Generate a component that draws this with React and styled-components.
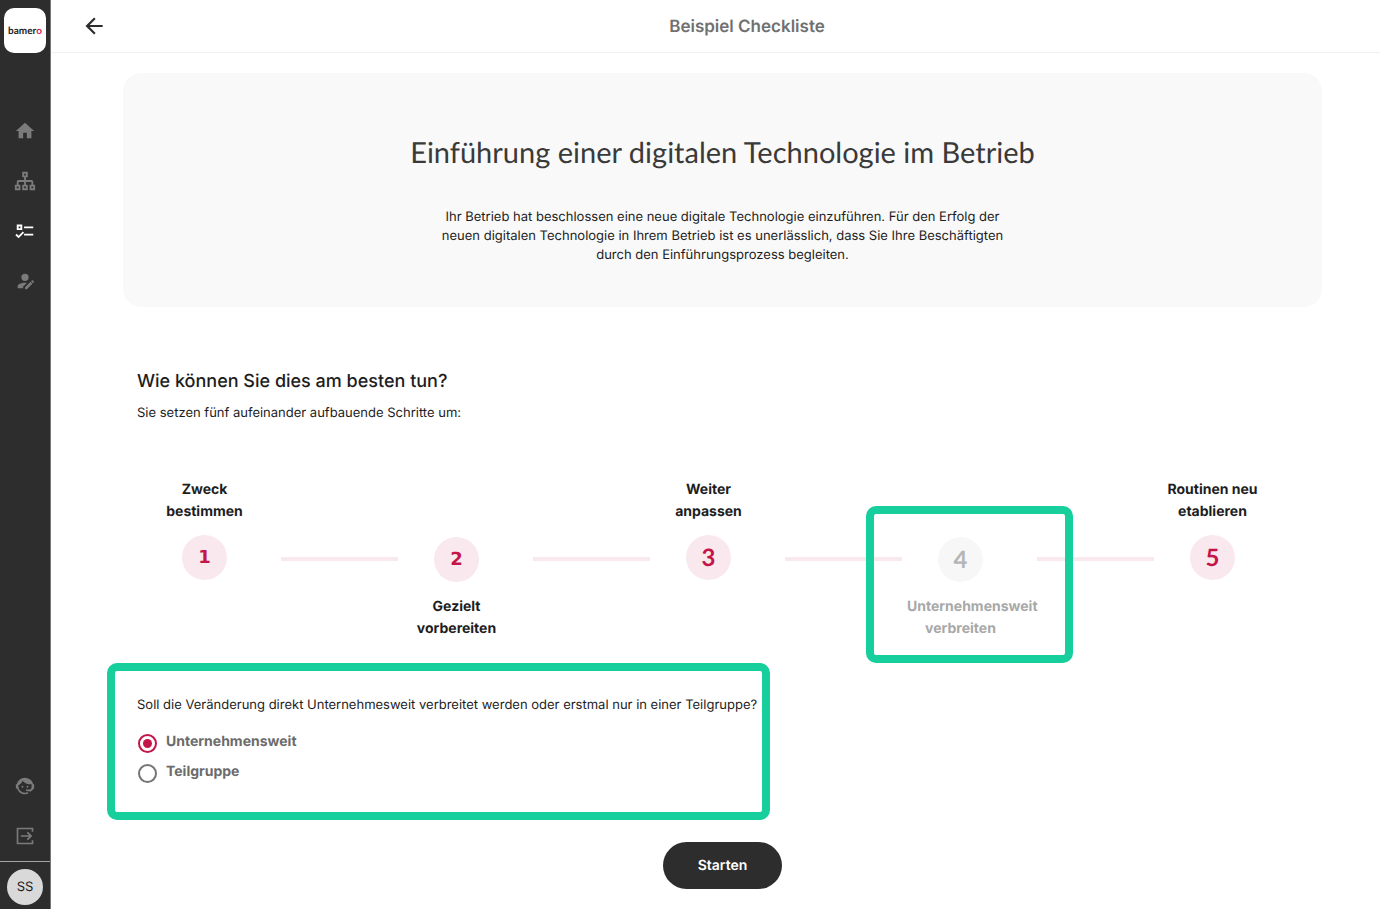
import React, { useState } from "react";
import styled, { createGlobalStyle } from "styled-components";

const GlobalStyle = createGlobalStyle`
  *, *::before, *::after { box-sizing: border-box; }
  body { margin: 0; background: #fff; color: #1d1d1d; font-family: Inter, "Liberation Sans", sans-serif; font-size: 13px; line-height: 19px; text-rendering: geometricPrecision; }
  button { text-rendering: inherit; }
  h1, h2, p, ol { margin: 0; padding: 0; }
`;

const Page = styled.div`
  display: flex;
  min-height: 100vh;
`;

const Sidebar = styled.aside`
  display: flex;
  flex-direction: column;
  align-items: center;
  flex: 0 0 51px;
  padding-top: 8px;
  background: #2d2d2d;
  border-right: 1px solid #767676;
`;

const Logo = styled.a`
  display: flex;
  align-items: center;
  justify-content: center;
  width: 42px;
  height: 45px;
  border-radius: 10px;
  background: #fff;
  color: #222;
  font: 700 10px/12px Lato, sans-serif;
  text-decoration: none;
`;

const LogoAccent = styled.span`
  color: #d81e55;
`;

const Nav = styled.nav`
  display: flex;
  flex-direction: column;
  margin-top: 53px;
  flex: 1;
`;

const NavLink = styled.a`
  display: flex;
  align-items: center;
  justify-content: center;
  width: 50px;
  height: 50px;
  color: ${(p) => (p.$active ? "#fff" : "#7b7b7b")};
`;

const SidebarFooter = styled.div`
  display: flex;
  flex-direction: column;
  align-items: center;
`;

const Account = styled.div`
  display: flex;
  justify-content: center;
  width: 50px;
  padding: 7px 0 4px;
  border-top: 1px solid #a5a5a5;
`;

const Avatar = styled.button`
  width: 36px;
  height: 36px;
  padding: 0;
  border: 0;
  border-radius: 50%;
  background: #d9d9d9;
  color: #1d1d1d;
  font: 13px/19px Inter, sans-serif;
`;

const Main = styled.main`
  flex: 1;
  min-width: 0;
`;

const TopBar = styled.header`
  display: flex;
  align-items: center;
  height: 53px;
  border-bottom: 1px solid #f0f0f0;
`;

const BackButton = styled.button`
  display: flex;
  align-items: center;
  justify-content: flex-end;
  width: 63px;
  height: 52px;
  padding: 0 7px;
  border: 0;
  background: none;
  color: #2d2d2d;
`;

const PageTitle = styled.h1`
  flex: 1;
  padding-top: 2px;
  text-align: center;
  font-size: 17px;
  line-height: 24px;
  font-weight: 600;
  color: #707070;
`;

const Content = styled.div`
  padding: 20px 58px 20px 72px;
`;

const Intro = styled.section`
  display: flex;
  flex-direction: column;
  align-items: center;
  padding: 60px 20px 42px;
  border-radius: 18px;
  background: #f9f9f9;
  text-align: center;
`;

const IntroTitle = styled.h2`
  font: 400 29px/40px Lato, sans-serif;
  color: #3a3a3a;
`;

const IntroText = styled.p`
  max-width: 580px;
  margin-top: 35px;
`;

const Guide = styled.section`
  padding: 63px 14px 0;
`;

const GuideTitle = styled.h2`
  font-size: 18px;
  line-height: 24px;
  font-weight: 500;
`;

const GuideText = styled.p`
  margin-top: 10px;
`;

const Steps = styled.ol`
  display: flex;
  margin-top: 55px;
  padding: 0 37px 0 9px;
  list-style: none;
`;

const Step = styled.li`
  position: relative;
  display: flex;
  flex: 1 1 0;
  min-width: 0;
  flex-direction: ${(p) => (p.$below ? "column" : "column-reverse")};
  justify-content: ${(p) => (p.$below ? "flex-start" : "flex-end")};
  align-items: center;
  gap: ${(p) => (p.$below ? "13px" : "12px")};
  padding-top: ${(p) => (p.$below ? "59px" : "0")};
`;

const StepNumber = styled.span`
  display: flex;
  align-items: center;
  justify-content: center;
  width: 45px;
  height: 45px;
  border-radius: 50%;
  background: ${(p) => (p.$muted ? "#f7f7f7" : "#f9e8ed")};
  color: ${(p) => (p.$muted ? "#b5b5b5" : "#c31547")};
  font: ${(p) => (p.$short ? '700 18px/45px "DejaVu Sans"' : "700 24px/45px Lato")}, sans-serif;
`;

const StepLabel = styled.span`
  width: 100%;
  padding: 1px 5px 0;
  text-align: center;
  font-size: 14px;
  line-height: 22px;
  font-weight: 700;
  color: ${(p) => (p.$muted ? "#a8a8a8" : "#1d1d1d")};
`;

const StepLine = styled.li`
  flex: 1 1 0;
  height: 4px;
  margin: 79px 0 0 18px;
  background: #f9e8ed;
`;

const StepHighlight = styled.span`
  position: absolute;
  inset: 28px -54px -23px -36px;
  border: 8px solid #16cf9c;
  border-radius: 10px;
  pointer-events: none;
`;

const Choice = styled.fieldset`
  width: fit-content;
  min-width: 658px;
  margin: 23px 0 0 -30px;
  padding: 25px 5px 25px 22px;
  border: 8px solid #16cf9c;
  border-radius: 10px;
`;

const Question = styled.p`
  margin-bottom: 12px;
`;

const Option = styled.label`
  display: flex;
  align-items: center;
  gap: 9px;
  height: 30px;
  padding-left: 1px;
  font-size: 14px;
  line-height: 22px;
  font-weight: 700;
  color: #6b6b6b;
`;

const Radio = styled.input`
  appearance: none;
  display: grid;
  place-items: center;
  width: 19px;
  height: 19px;
  margin: 2px 0 0;
  border: 2px solid #757575;
  border-radius: 50%;

  &:checked { border-color: #c31547; }
  &:checked::before {
    content: "";
    width: 9px;
    height: 9px;
    border-radius: 50%;
    background: #c31547;
  }
`;

const StartButton = styled.button`
  display: block;
  height: 47px;
  margin: 22px auto 0;
  padding: 0 35px;
  border: 0;
  border-radius: 24px;
  background: #2d2d2d;
  color: #fff;
  font: 600 14px/22px Inter, sans-serif;
`;

const ICONS = {
  back: "M20,11V13H8L13.5,18.5L12.08,19.92L4.16,12L12.08,4.08L13.5,5.5L8,11H20Z",
  home: "M10,20V14H14V20H19V12H22L12,3L2,12H5V20H10Z",
  sitemap:
    "M9 2V8H11V11H5C3.89 11 3 11.89 3 13V16H1V22H7V16H5V13H11V16H9V22H15V16H13V13H19V16H17V22H23V16H21V13C21 11.89 20.11 11 19 11H13V8H15V2H9M11 4H13V6H11V4M3 18H5V20H3V18M11 18H13V20H11V18M19 18H21V20H19V18Z",
  checklist:
    "M3,5H9V11H3V5M5,7V9H7V7H5M11,7H21V9H11V7M11,15H21V17H11V15M5,20L1.5,16.5L2.91,15.09L5,17.17L9.59,12.59L11,14L5,20Z",
  userEdit:
    "M21.7,13.35L20.7,14.35L18.65,12.3L19.65,11.3C19.86,11.09 20.21,11.09 20.42,11.3L21.7,12.58C21.91,12.79 21.91,13.14 21.7,13.35M12,18.94L18.06,12.88L20.11,14.93L14.06,21H12V18.94M12,14C7.58,14 4,15.79 4,18V20H10V18.11L14,14.11C13.34,14.03 12.67,14 12,14M12,4A4,4 0 0,0 8,8A4,4 0 0,0 12,12A4,4 0 0,0 16,8A4,4 0 0,0 12,4Z",
  agent:
    "M18.72,14.76C19.07,13.91 19.26,13 19.26,12C19.26,11.28 19.15,10.59 18.96,9.95C18.31,10.1 17.63,10.18 16.92,10.18C13.86,10.18 11.15,8.67 9.5,6.34C8.61,8.5 6.91,10.26 4.77,11.22C4.73,11.47 4.73,11.74 4.73,12A7.27,7.27 0 0,0 12,19.27C13.05,19.27 14.06,19.04 14.97,18.63C15.54,19.72 15.8,20.26 15.78,20.26C14.14,20.81 12.87,21.08 12,21.08C9.58,21.08 7.27,20.13 5.57,18.42C4.53,17.38 3.76,16.11 3.33,14.73H2V10.18H3.09C3.93,6.04 7.6,2.92 12,2.92C14.4,2.92 16.71,3.87 18.42,5.58C19.69,6.84 20.54,8.45 20.89,10.18H22V14.73H21.94L18.38,18L13.08,17.4V15.73H17.91L18.72,14.76M9.27,11.77A1.14,1.14 0 0,1 9.27,14.04A1.14,1.14 0 0,1 9.27,11.77M14.72,11.77A1.14,1.14 0 0,1 14.72,14.04A1.14,1.14 0 0,1 14.72,11.77Z",
  exit: "M2,2H22V7H20V4H4V20H20V17H22V22H2V2M15.5,7L20.8,12L15.5,17L14.1,15.6L16.9,13H7V11H16.9L14.1,8.4L15.5,7Z",
};

function Icon({ name, size }) {
  return (
    <svg width={size} height={size} viewBox="0 0 24 24" fill="currentColor" aria-hidden="true">
      <path d={ICONS[name]} />
    </svg>
  );
}

const NAV = [
  { icon: "home", label: "Startseite", size: 22 },
  { icon: "sitemap", label: "Struktur", size: 22 },
  { icon: "checklist", label: "Checklisten", size: 22, active: true },
  { icon: "userEdit", label: "Profil bearbeiten", size: 22 },
];

const STEPS = [
  { n: 1, lines: ["Zweck", "bestimmen"], short: true },
  { n: 2, lines: ["Gezielt", "vorbereiten"], short: true, below: true },
  { n: 3, lines: ["Weiter", "anpassen"] },
  { n: 4, lines: ["Unternehmensweit", "verbreiten"], below: true, muted: true },
  { n: 5, lines: ["Routinen neu", "etablieren"] },
];

export default function App() {
  const [scope, setScope] = useState("Unternehmensweit");
  return (
    <Page>
      <GlobalStyle />
      <Sidebar>
        <Logo href="#">
          <span>bamer<LogoAccent>o</LogoAccent></span>
        </Logo>
        <Nav>
          {NAV.map((item) => (
            <NavLink key={item.icon} href="#" aria-label={item.label} $active={item.active}>
              <Icon name={item.icon} size={item.size} />
            </NavLink>
          ))}
        </Nav>
        <SidebarFooter>
          <NavLink href="#" aria-label="Support"><Icon name="agent" size={22} /></NavLink>
          <NavLink href="#" aria-label="Abmelden"><Icon name="exit" size={20} /></NavLink>
          <Account><Avatar>SS</Avatar></Account>
        </SidebarFooter>
      </Sidebar>
      <Main>
        <TopBar>
          <BackButton aria-label="Zurück"><Icon name="back" size={26} /></BackButton>
          <PageTitle>Beispiel Checkliste</PageTitle>
        </TopBar>
        <Content>
          <Intro>
            <IntroTitle>Einführung einer digitalen Technologie im Betrieb</IntroTitle>
            <IntroText>
              Ihr Betrieb hat beschlossen eine neue digitale Technologie einzuführen. Für den Erfolg der
              neuen digitalen Technologie in Ihrem Betrieb ist es unerlässlich, dass Sie Ihre Beschäftigten
              durch den Einführungsprozess begleiten.
            </IntroText>
          </Intro>
          <Guide>
            <GuideTitle>Wie können Sie dies am besten tun?</GuideTitle>
            <GuideText>Sie setzen fünf aufeinander aufbauende Schritte um:</GuideText>
            <Steps>
              {STEPS.map((s, i) => (
                <React.Fragment key={s.n}>
                  {i > 0 && <StepLine role="presentation" />}
                  <Step $below={s.below}>
                    <StepNumber $short={s.short} $muted={s.muted}>{s.n}</StepNumber>
                    <StepLabel $muted={s.muted}>{s.lines[0]}<br />{s.lines[1]}</StepLabel>
                    {s.muted && <StepHighlight />}
                  </Step>
                </React.Fragment>
              ))}
            </Steps>
            <Choice aria-labelledby="scope-question">
              <Question id="scope-question">
                Soll die Veränderung direkt Unternehmesweit verbreitet werden oder erstmal nur in einer Teilgruppe?
              </Question>
              {["Unternehmensweit", "Teilgruppe"].map((value) => (
                <Option key={value}>
                  <Radio type="radio" name="scope" checked={scope === value} onChange={() => setScope(value)} />
                  {value}
                </Option>
              ))}
            </Choice>
          </Guide>
          <StartButton>Starten</StartButton>
        </Content>
      </Main>
    </Page>
  );
}
